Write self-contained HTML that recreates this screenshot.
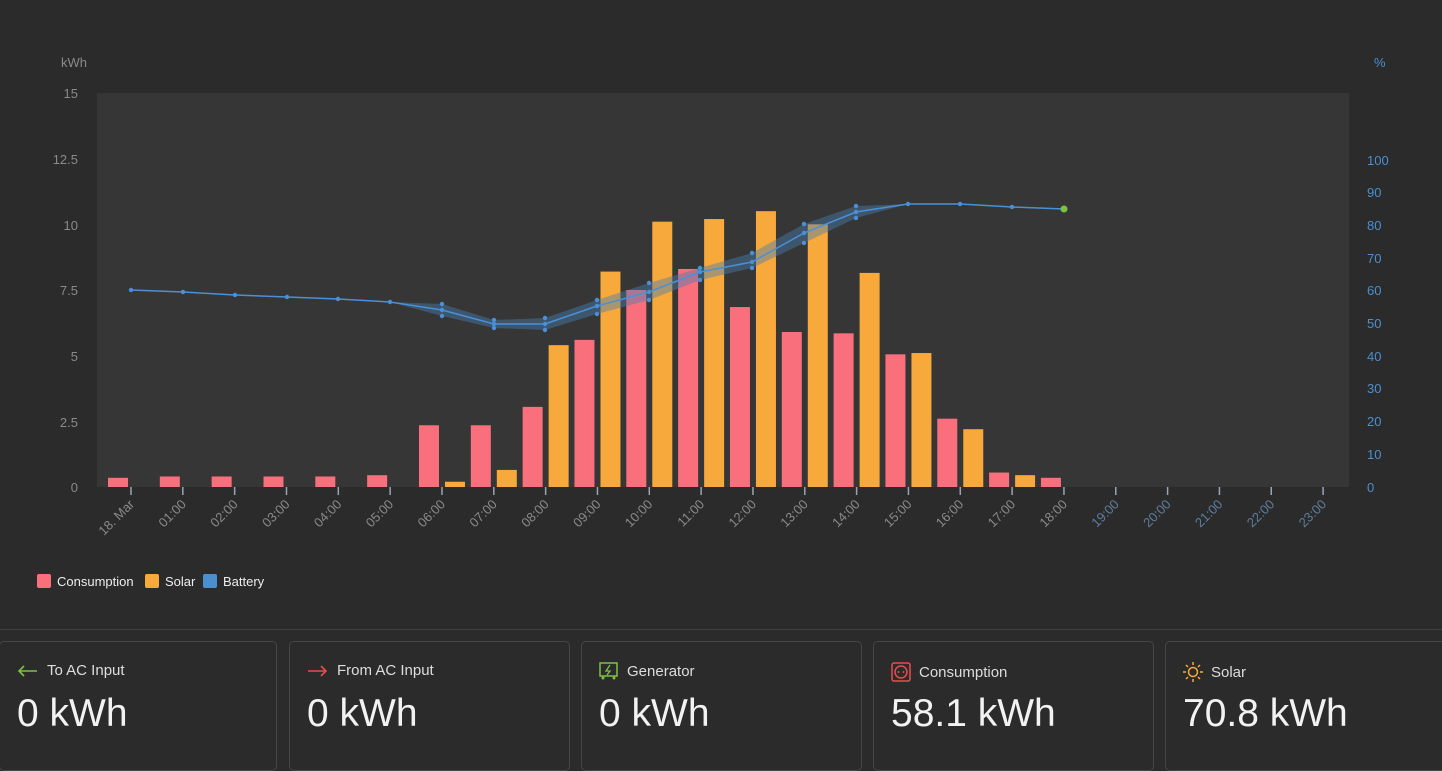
<!DOCTYPE html>
<html><head><meta charset="utf-8"><style>
*{margin:0;padding:0;box-sizing:border-box}
body{width:1442px;height:760px;background:#2b2b2b;overflow:hidden;font-family:"Liberation Sans",sans-serif;position:relative}
.line{position:absolute;left:0;top:629px;width:1442px;height:1px;background:#404040}
.card{position:absolute;top:641px;height:130px;border:1px solid #464646;border-radius:5px;background:#2b2b2b}
.lbl{position:absolute;left:17px;top:20px;color:#ddd;font-size:15px;display:flex;align-items:center;gap:8px}
.val{position:absolute;left:17px;top:50px;color:#f2f2f2;font-size:39px}
</style></head><body>
<svg width="1442" height="620" style="position:absolute;left:0;top:0" font-family="Liberation Sans, sans-serif">
<rect x="97" y="93" width="1252" height="394" fill="#363636"/>
<g font-size="13" fill="#8a8a8a" text-anchor="end">
<text x="61" y="67" text-anchor="start">kWh</text>
<text x="78" y="98">15</text><text x="78" y="164">12.5</text><text x="78" y="230">10</text><text x="78" y="295">7.5</text><text x="78" y="361">5</text><text x="78" y="427">2.5</text><text x="78" y="492">0</text>
</g>
<g font-size="13" fill="#4a8fd0" text-anchor="start">
<text x="1374" y="67">%</text>
<text x="1367" y="165">100</text><text x="1367" y="197">90</text><text x="1367" y="230">80</text><text x="1367" y="263">70</text><text x="1367" y="295">60</text><text x="1367" y="328">50</text><text x="1367" y="361">40</text><text x="1367" y="393">30</text><text x="1367" y="426">20</text><text x="1367" y="459">10</text><text x="1367" y="492">0</text>
</g>
<g id="bars"></g>
<g id="ticks"></g>
<path d="M390,302 L442,304 L494,320 L545,318 L597,300 L649,283 L700,268 L752,253 L804,224 L856,206 L908,204 L856,218 L804,243 L752,268 L700,280 L649,300 L597,314 L545,330 L494,328 L442,316 Z" fill="#4a7fb0" opacity="0.45"/>
<polyline fill="none" stroke="#4a90d9" stroke-width="1.5" points="131,290 183,292 235,295 287,297 338,299 390,302 442,310 494,324 545,324 597,306 649,292 700,272 752,262 804,233 856,212 908,204 960,204 1012,207 1064,209"/>
<g fill="#4a90d9" id="dots"></g>
<circle cx="1064" cy="209" r="3.5" fill="#7cc242"/>
<g font-size="13">
<rect x="37" y="574" width="14" height="14" rx="2" fill="#f96f7c"/><text x="57" y="586" fill="#eee">Consumption</text>
<rect x="145" y="574" width="14" height="14" rx="2" fill="#f7a93b"/><text x="165" y="586" fill="#eee">Solar</text>
<rect x="203" y="574" width="14" height="14" rx="2" fill="#4a8fd0"/><text x="223" y="586" fill="#eee">Battery</text>
</g>
</svg>
<script>
var ns="http://www.w3.org/2000/svg";
var cons=[.35,.4,.4,.4,.4,.45,2.35,2.35,3.05,5.6,7.5,8.3,6.85,5.9,5.85,5.05,2.6,.55,.35];
var sol=[0,0,0,0,0,0,.2,.65,5.4,8.2,10.1,10.2,10.5,10.0,8.15,5.1,2.2,.45,0];
var labs=["18. Mar"];for(var i=1;i<24;i++)labs.push((i<10?"0":"")+i+":00");
var b=document.getElementById("bars"),t=document.getElementById("ticks"),d=document.getElementById("dots");
function el(n,a,p){var e=document.createElementNS(ns,n);for(var k in a)e.setAttribute(k,a[k]);p.appendChild(e);return e;}
for(var i=0;i<24;i++){var x=131+i*51.83;
 if(i<19){var h=cons[i]*26.27;if(h>0)el("rect",{x:x-23,y:487-h,width:20,height:h,fill:"#f96f7c"},b);
 h=sol[i]*26.27;if(h>0)el("rect",{x:x+3,y:487-h,width:20,height:h,fill:"#f7a93b"},b);}
 el("line",{x1:x,y1:487,x2:x,y2:495,stroke:"#9aa3b5","stroke-width":1.5},t);
 var tx=el("text",{x:x+4,y:505,"font-size":"13",fill:i<19?"#8a8a8a":"#5e7ea0","text-anchor":"end",transform:"rotate(-45 "+(x+4)+" 505)"},t);tx.textContent=labs[i];}
[[131,290],[183,292],[235,295],[287,297],[338,299],[390,302],[442,310],[442,304],[442,316],[494,324],[494,320],[494,328],[545,324],[545,318],[545,330],[597,306],[597,300],[597,314],[649,292],[649,283],[649,300],[700,272],[700,268],[700,280],[752,262],[752,253],[752,268],[804,233],[804,224],[804,243],[856,212],[856,206],[856,218],[908,204],[960,204],[1012,207]].forEach(function(p){el("circle",{cx:p[0],cy:p[1],r:2.2},d);});
</script>
<div class="line"></div>
<div class="card" style="left:-1px;width:278px"><div class="lbl"><svg width="22" height="12"><path d="M20 6H2M7 1L2 6l5 5" stroke="#7cc242" stroke-width="1.6" fill="none"/></svg>To AC Input</div><div class="val">0 kWh</div></div>
<div class="card" style="left:289px;width:281px"><div class="lbl"><svg width="22" height="12"><path d="M1 6h18M14 1l5 5-5 5" stroke="#e84c4c" stroke-width="1.6" fill="none"/></svg>From AC Input</div><div class="val">0 kWh</div></div>
<div class="card" style="left:581px;width:281px"><div class="lbl"><svg width="20" height="18"><rect x="1" y="1" width="17" height="13" stroke="#7cc242" stroke-width="1.5" fill="none"/><path d="M11 3l-4 6h4l-3 4" stroke="#7cc242" stroke-width="1.3" fill="none"/><circle cx="4" cy="16" r="1.5" fill="#7cc242"/><circle cx="15" cy="16" r="1.5" fill="#7cc242"/></svg>Generator</div><div class="val">0 kWh</div></div>
<div class="card" style="left:873px;width:281px"><div class="lbl"><svg width="20" height="20"><rect x="1" y="1" width="18" height="18" rx="2" stroke="#e84c4c" stroke-width="1.5" fill="none"/><circle cx="10" cy="10" r="6" stroke="#e84c4c" stroke-width="1.5" fill="none"/><circle cx="7.5" cy="10" r="1" fill="#e84c4c"/><circle cx="12.5" cy="10" r="1" fill="#e84c4c"/></svg>Consumption</div><div class="val">58.1 kWh</div></div>
<div class="card" style="left:1165px;width:282px"><div class="lbl"><svg width="20" height="20" stroke="#f7a93b" stroke-width="1.5" fill="none"><circle cx="10" cy="10" r="4.5"/><path d="M10 0v3M10 17v3M0 10h3M17 10h3M3 3l2 2M15 15l2 2M3 17l2-2M15 5l2-2"/></svg>Solar</div><div class="val">70.8 kWh</div></div>
</body></html>
